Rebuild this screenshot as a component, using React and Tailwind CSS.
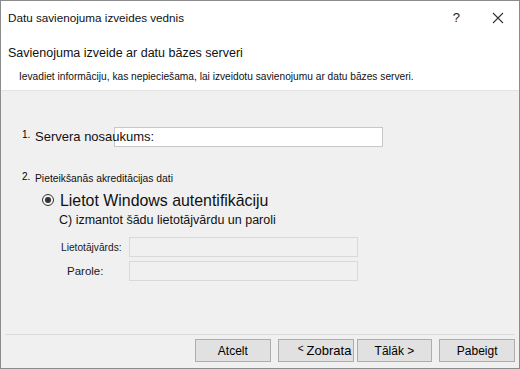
function Field({ label, labelClass }) {
    return (
        <div className="flex items-center h-[20px]">
            <span className={`text-[10.2px] text-[#1a1a1a] ${labelClass}`}>{label}</span>
            <div className="ml-auto w-[229px] h-[20px] bg-[#f0f0f0] border border-[#d9d9d9]" />
        </div>
    );
}

function Button({ children, className = '' }) {
    return (
        <div className={`w-[76px] h-[23px] bg-[#e1e1e1] border border-[#adadad] flex items-center justify-center text-[12px] text-black ${className}`}>
            {children}
        </div>
    );
}

export default function App() {
    return (
        <div
            className="w-[520px] h-[369px] border border-[#8c8c8c] bg-[#f0f0f0] flex flex-col overflow-hidden"
            style={{ fontFamily: '"Liberation Sans", Arial, sans-serif' }}
        >
            {/* Header */}
            <div className="bg-white h-[90px] border-b border-[#e3e3e3] flex flex-col">
                <div className="flex items-center h-[33px] pl-[7px] pr-[14px]">
                    <span className="text-[11.7px] text-[#111]">Datu savienojuma izveides vednis</span>
                    <span className="ml-auto mr-[32px] text-[13px] text-[#222]">?</span>
                    <svg width="12" height="12" viewBox="0 0 12 12" className="mr-[1px]">
                        <path d="M1 1 L11 11 M11 1 L1 11" stroke="#333" strokeWidth="1.1" />
                    </svg>
                </div>
                <div className="pl-[7px] mt-[10px] text-[12.5px] text-[#111]">
                    Savienojuma izveide ar datu bāzes serveri
                </div>
                <div className="pl-[18px] mt-[6px] text-[10.2px] text-[#111]">
                    Ievadiet informāciju, kas nepieciešama, lai izveidotu savienojumu ar datu bāzes serveri.
                </div>
            </div>

            {/* Body */}
            <div className="flex-1 flex flex-col pl-[21px]">
                <div className="flex items-center mt-[36px] h-[20px]">
                    <span className="text-[10px] w-[13px] -mt-[6px]">1.</span>
                    <span className="relative z-10 text-[13px] text-[#111]">Servera nosaukums:</span>
                    <div className="-ml-[40px] w-[269px] h-[20px] bg-white border border-[#c8c8c8]" />
                </div>

                <div className="flex items-center mt-[24px]">
                    <span className="text-[10px] w-[13px] -mt-[5px]">2.</span>
                    <span className="text-[10.3px] text-[#111]">Pieteikšanās akreditācijas dati</span>
                </div>

                <div className="flex items-center mt-[4px] pl-[20px] h-[20px]">
                    <span className="w-[12px] h-[12px] rounded-full border border-[#333] flex items-center justify-center">
                        <span className="w-[6px] h-[6px] rounded-full bg-[#333]" />
                    </span>
                    <span className="ml-[6px] text-[15.9px] text-[#111]">Lietot Windows autentifikāciju</span>
                </div>
                <div className="pl-[37px] text-[12.5px] text-[#111] leading-[20px]">
                    C) izmantot šādu lietotājvārdu un paroli
                </div>

                <div className="w-[336px] flex flex-col gap-[4px] mt-[7px]">
                    <Field label="Lietotājvārds:" labelClass="ml-[39px]" />
                    <Field label="Parole:" labelClass="ml-[45px] text-[11.5px]" />
                </div>
            </div>

            {/* Footer */}
            <div className="border-t border-[#dcdcdc] mx-[4px] h-[34px] flex items-start pt-[4px] pl-[190px] gap-[4px]">
                <Button>Atcelt</Button>
                <Button className="ml-[3px] w-[75px] !justify-start pl-[19px]">
                    <span className="text-[10px] mr-[3px] -mt-[4px]">&lt;</span>
                    <span className="text-[13px] whitespace-nowrap">Zobrata</span>
                </Button>
                <Button className="-ml-[1px] text-[11px]">Tālāk &gt;</Button>
                <Button className="ml-[3px] w-[75px] text-[12.5px]">Pabeigt</Button>
            </div>
        </div>
    );
}
